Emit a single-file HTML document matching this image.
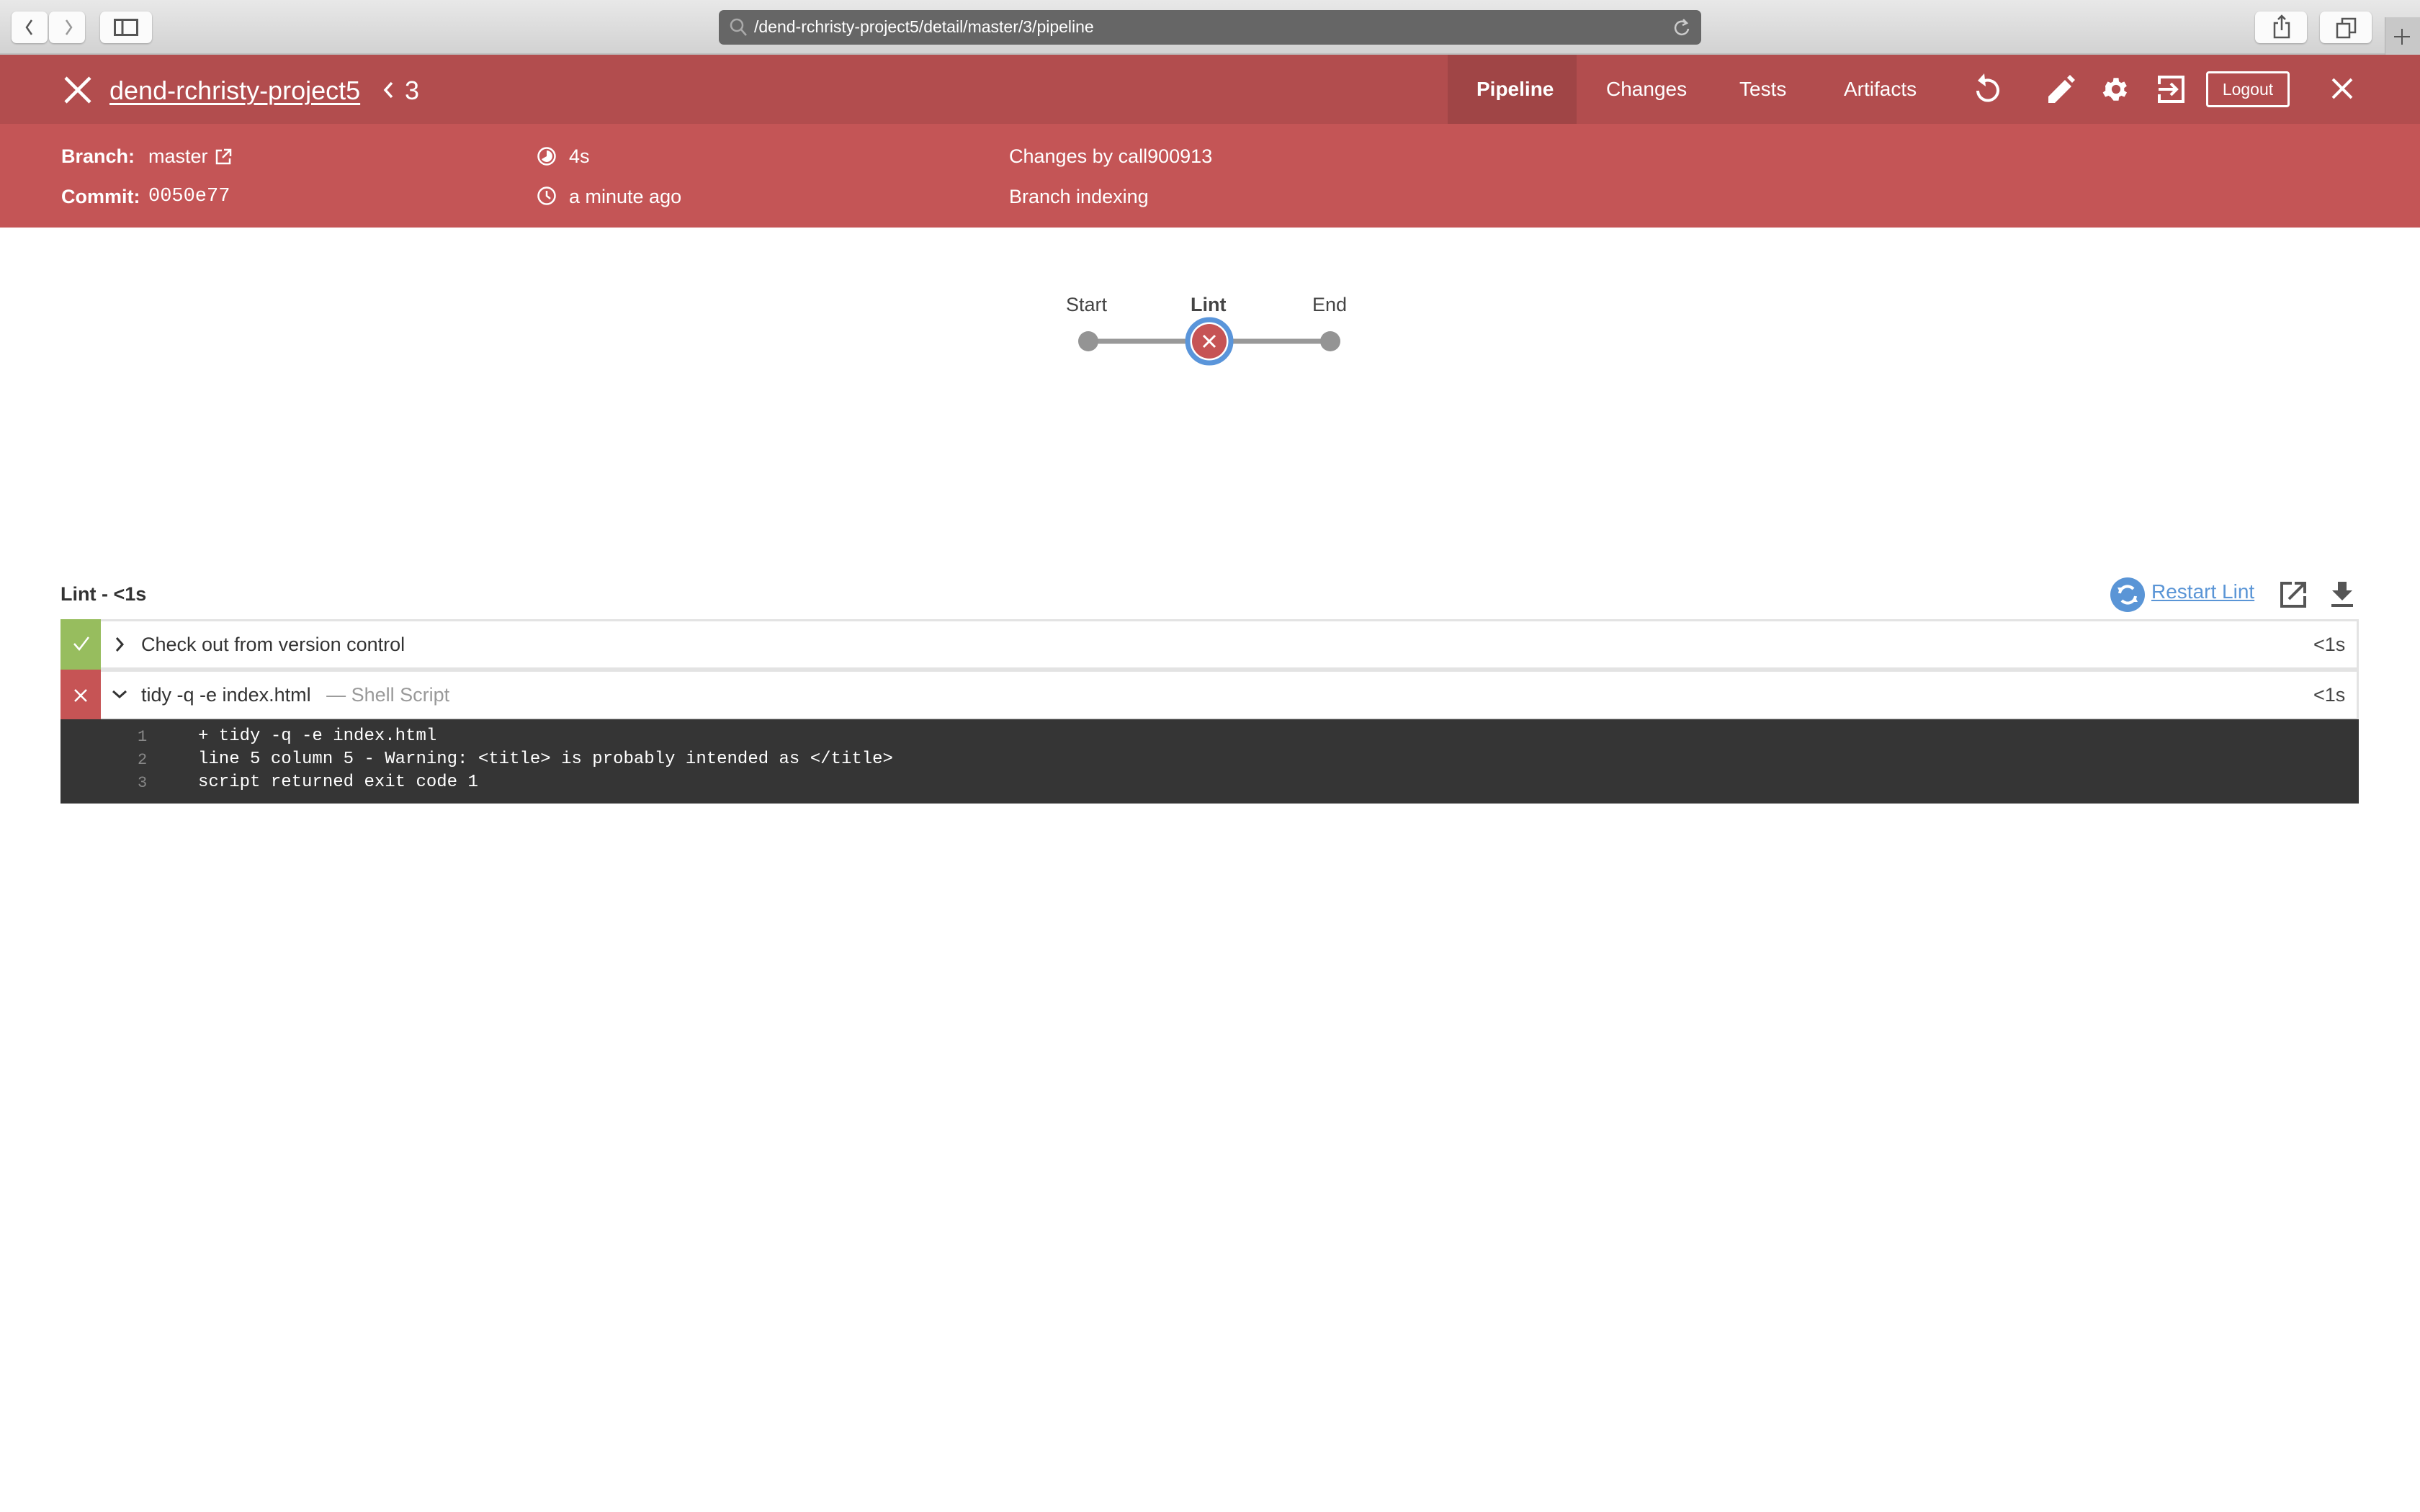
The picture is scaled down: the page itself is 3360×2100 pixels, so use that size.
<!DOCTYPE html>
<html><head><meta charset="utf-8"><style>
*{margin:0;padding:0;box-sizing:border-box}
body{width:3360px;height:2100px;background:#fff;font-family:"Liberation Sans",sans-serif;position:relative;overflow:hidden}
.a{position:absolute}
.chrome{left:0;top:0;width:3360px;height:76px;background:linear-gradient(#e8e8e8,#d2d2d2);border-bottom:2px solid #bdbdbd}
.btn{background:#fbfbfb;border-radius:7px;box-shadow:0 1px 2px #999;height:44px;top:16px}
.hdr{left:0;top:76px;width:3360px;height:96px;background:#b24d4e}
.sub{left:0;top:172px;width:3360px;height:144px;background:#c45556}
.w{color:#fff}
.nav{color:#fff;font-size:28px;top:108px}
.st{color:#fff;font-size:27px}
.lbl{color:#444;font-size:27px}
.row{left:84px;width:3191px;border:3px solid #e3e3e3;background:#fff}
.code{font-family:"Liberation Mono",monospace;font-size:24px;color:#fff}
.ln{font-family:"Liberation Mono",monospace;font-size:22px;color:#888}
</style></head><body>
<div class="a chrome"></div>
<div class="a btn" style="left:16px;width:50px"></div>
<div class="a btn" style="left:68px;width:50px"></div>
<svg class="a" style="left:30px;top:24px" width="80" height="28"><path d="M14 4 L7 14 L14 24" stroke="#555" stroke-width="2.5" fill="none"/><path d="M62 4 L69 14 L62 24" stroke="#999" stroke-width="2.5" fill="none"/></svg>
<div class="a btn" style="left:139px;width:72px"></div>
<svg class="a" style="left:158px;top:26px" width="34" height="24"><rect x="1.5" y="1.5" width="31" height="21" fill="none" stroke="#555" stroke-width="3"/><line x1="12" y1="2" x2="12" y2="22" stroke="#555" stroke-width="3"/></svg>
<div class="a" style="left:998px;top:14px;width:1364px;height:48px;background:#666;border-radius:7px"></div>
<svg class="a" style="left:1012px;top:24px" width="28" height="28"><circle cx="11" cy="11" r="8" fill="none" stroke="#aaa" stroke-width="2.5"/><line x1="17" y1="17" x2="24" y2="25" stroke="#aaa" stroke-width="2.5"/></svg>
<div class="a" style="left:1047px;top:24px;font-size:23px;color:#fff">/dend-rchristy-project5/detail/master/3/pipeline</div>
<svg class="a" style="left:2322px;top:24px" width="26" height="30"><path d="M19 8 A9 9 0 1 0 22 16" fill="none" stroke="#ccc" stroke-width="2.5"/><path d="M15 3 L20 8 L14 11" fill="none" stroke="#ccc" stroke-width="2.5"/></svg>
<div class="a btn" style="left:3131px;width:72px"></div>
<svg class="a" style="left:3155px;top:20px" width="26" height="34"><path d="M8 12 H3 V32 H23 V12 H18" fill="none" stroke="#555" stroke-width="2.5"/><path d="M13 2 V22 M8 7 L13 2 L18 7" fill="none" stroke="#555" stroke-width="2.5"/></svg>
<div class="a btn" style="left:3221px;width:72px"></div>
<svg class="a" style="left:3243px;top:24px" width="30" height="30"><rect x="2" y="9" width="17" height="19" fill="none" stroke="#555" stroke-width="2.5"/><path d="M9 8 V2 H27 V21 H20" fill="none" stroke="#555" stroke-width="2.5"/></svg>
<div class="a" style="left:3311px;top:24px;width:49px;height:52px;background:#c8c8c8;border-left:1px solid #b0b0b0"></div>
<svg class="a" style="left:3322px;top:38px" width="26" height="26"><path d="M13 2 V24 M2 13 H24" stroke="#555" stroke-width="2"/></svg>

<div class="a hdr"></div>
<div class="a" style="left:2010px;top:76px;width:179px;height:96px;background:#a04546"></div>
<svg class="a" style="left:88px;top:106px" width="40" height="38"><path d="M3 2 L37 36 M37 2 L3 36" stroke="#fff" stroke-width="4.5"/></svg>
<div class="a w" style="left:152px;top:105px;font-size:36px;text-decoration:underline;text-decoration-thickness:3px;text-underline-offset:5px">dend-rchristy-project5</div>
<svg class="a" style="left:530px;top:112px" width="20" height="26"><path d="M14 3 L5 13 L14 23" stroke="#fff" stroke-width="3.5" fill="none"/></svg>
<div class="a w" style="left:562px;top:105px;font-size:36px">3</div>
<div class="a nav" style="left:2050px;font-weight:bold">Pipeline</div>
<div class="a nav" style="left:2230px">Changes</div>
<div class="a nav" style="left:2415px">Tests</div>
<div class="a nav" style="left:2560px">Artifacts</div>
<svg class="a" style="left:2738px;top:100px" width="42" height="46"><path d="M14 14 A14 14 0 1 1 8 26" fill="none" stroke="#fff" stroke-width="4"/><path d="M17 2 L8 12 L19 20 Z" fill="#fff"/></svg>
<svg class="a" style="left:2842px;top:103px" width="40" height="42"><path d="M2 40 V31 L25 8 L34 17 L11 40 Z M28 5 L32 1 L39 8 L35 12 Z" fill="#fff"/></svg>
<svg class="a" style="left:2917px;top:103px" width="42" height="42" viewBox="0 0 24 24"><path fill="#fff" d="M19.4 13a7.5 7.5 0 0 0 0-2l2.1-1.6-2-3.5-2.5 1a7 7 0 0 0-1.7-1L15 3h-4l-.4 2.9a7 7 0 0 0-1.7 1l-2.5-1-2 3.5L4.6 11a7.5 7.5 0 0 0 0 2l-2.1 1.6 2 3.5 2.5-1a7 7 0 0 0 1.7 1L11 21h4l.4-2.9a7 7 0 0 0 1.7-1l2.5 1 2-3.5zM13 15.5a3.5 3.5 0 1 1 0-7 3.5 3.5 0 0 1 0 7z" transform="translate(-1 0)"/></svg>
<svg class="a" style="left:2995px;top:105px" width="38" height="38"><path d="M3 12 V2 H36 V36 H3 V26" fill="none" stroke="#fff" stroke-width="4"/><path d="M2 19 H26 M19 11 L27 19 L19 27" fill="none" stroke="#fff" stroke-width="4"/></svg>
<div class="a" style="left:3063px;top:99px;width:116px;height:50px;border:3px solid #fff;border-radius:4px;color:#fff;font-size:23px;text-align:center;line-height:44px">Logout</div>
<svg class="a" style="left:3237px;top:108px" width="30" height="30"><path d="M2 2 L28 28 M28 2 L2 28" stroke="#fff" stroke-width="4"/></svg>

<div class="a sub"></div>
<div class="a st" style="left:85px;top:202px;font-weight:bold">Branch:</div>
<div class="a st" style="left:206px;top:202px">master</div>
<svg class="a" style="left:298px;top:206px" width="24" height="24"><path d="M10 3 H3 V21 H21 V14" fill="none" stroke="#fff" stroke-width="2.5"/><path d="M13 2 H22 V11 M22 2 L11 13" fill="none" stroke="#fff" stroke-width="2.5"/></svg>
<div class="a st" style="left:85px;top:258px;font-weight:bold">Commit:</div>
<div class="a st" style="left:206px;top:258px;font-family:'Liberation Mono',monospace;font-size:27px">0050e77</div>
<svg class="a" style="left:745px;top:203px" width="28" height="28"><circle cx="14" cy="14" r="11.5" fill="none" stroke="#fff" stroke-width="2.5"/><path d="M14 14 V6 A8 8 0 1 1 7 18 Z" fill="#fff"/></svg>
<div class="a st" style="left:790px;top:202px">4s</div>
<svg class="a" style="left:745px;top:258px" width="28" height="28"><circle cx="14" cy="14" r="11.5" fill="none" stroke="#fff" stroke-width="2.5"/><path d="M14 7 V14 L19 18" fill="none" stroke="#fff" stroke-width="2.5"/></svg>
<div class="a st" style="left:790px;top:258px">a minute ago</div>
<div class="a st" style="left:1401px;top:202px">Changes by call900913</div>
<div class="a st" style="left:1401px;top:258px">Branch indexing</div>

<div class="a lbl" style="left:1480px;top:408px;font-size:27px">Start</div>
<div class="a lbl" style="left:1653px;top:408px;font-size:27px;font-weight:bold">Lint</div>
<div class="a lbl" style="left:1822px;top:408px;font-size:27px">End</div>
<svg class="a" style="left:1480px;top:440px" width="400" height="70"><line x1="31" y1="34" x2="367" y2="34" stroke="#999" stroke-width="7"/><circle cx="31" cy="34" r="14" fill="#949494"/><circle cx="367" cy="34" r="14" fill="#949494"/><circle cx="199" cy="34" r="30" fill="#fff" stroke="#5a95da" stroke-width="7"/><circle cx="199" cy="34" r="24" fill="#c65455"/><path d="M191 26 L207 42 M207 26 L191 42" stroke="#fff" stroke-width="3"/></svg>

<div class="a" style="left:84px;top:810px;font-size:27px;font-weight:bold;color:#333">Lint - &lt;1s</div>
<svg class="a" style="left:2930px;top:802px" width="48" height="48"><circle cx="24" cy="24" r="24" fill="#5a95d6"/><path d="M32 16 A11 11 0 0 0 13 22 M16 32 A11 11 0 0 0 35 26" fill="none" stroke="#fff" stroke-width="4"/><path d="M10 14 L18 14 L14 22Z M38 34 L30 34 L34 26Z" fill="#fff"/></svg>
<div class="a" style="left:2987px;top:806px;font-size:28px;color:#5a95d6;text-decoration:underline">Restart Lint</div>
<svg class="a" style="left:3164px;top:806px" width="40" height="40"><path d="M18 4 H4 V36 H36 V22" fill="none" stroke="#555" stroke-width="4"/><path d="M22 4 H36 V18 M35 5 L14 26" fill="none" stroke="#555" stroke-width="4"/></svg>
<svg class="a" style="left:3236px;top:808px" width="32" height="38"><path d="M10 0 H22 V12 H30 L16 26 L2 12 H10Z" fill="#555"/><rect x="1" y="31" width="30" height="4" fill="#555"/></svg>

<div class="a row" style="top:860px;height:70px"></div>
<div class="a" style="left:84px;top:860px;width:56px;height:70px;background:#97bd5e"></div>
<svg class="a" style="left:100px;top:882px" width="26" height="24"><path d="M3 12 L10 20 L23 3" fill="none" stroke="#fff" stroke-width="2.5"/></svg>
<svg class="a" style="left:158px;top:883px" width="16" height="24"><path d="M4 3 L12 12 L4 21" fill="none" stroke="#333" stroke-width="3"/></svg>
<div class="a" style="left:196px;top:880px;font-size:27px;color:#333">Check out from version control</div>
<div class="a" style="left:3212px;top:880px;font-size:27px;color:#444">&lt;1s</div>

<div class="a row" style="top:930px;height:70px"></div>
<div class="a" style="left:84px;top:930px;width:56px;height:70px;background:#c65455"></div>
<svg class="a" style="left:101px;top:955px" width="22" height="22"><path d="M3 3 L19 19 M19 3 L3 19" stroke="#fff" stroke-width="2.5"/></svg>
<svg class="a" style="left:154px;top:956px" width="24" height="16"><path d="M3 4 L12 12 L21 4" fill="none" stroke="#333" stroke-width="3"/></svg>
<div class="a" style="left:196px;top:950px;font-size:27px;color:#333">tidy -q -e index.html <span style="color:#999;margin-left:14px">— Shell Script</span></div>
<div class="a" style="left:3212px;top:950px;font-size:27px;color:#444">&lt;1s</div>

<div class="a" style="left:84px;top:999px;width:3191px;height:117px;background:#353535"></div>
<div class="a ln" style="left:191px;top:1011px">1</div>
<div class="a ln" style="left:191px;top:1043px">2</div>
<div class="a ln" style="left:191px;top:1075px">3</div>
<div class="a code" style="left:275px;top:1009px">+ tidy -q -e index.html</div>
<div class="a code" style="left:275px;top:1041px">line 5 column 5 - Warning: &lt;title&gt; is probably intended as &lt;/title&gt;</div>
<div class="a code" style="left:275px;top:1073px">script returned exit code 1</div>
</body></html>
